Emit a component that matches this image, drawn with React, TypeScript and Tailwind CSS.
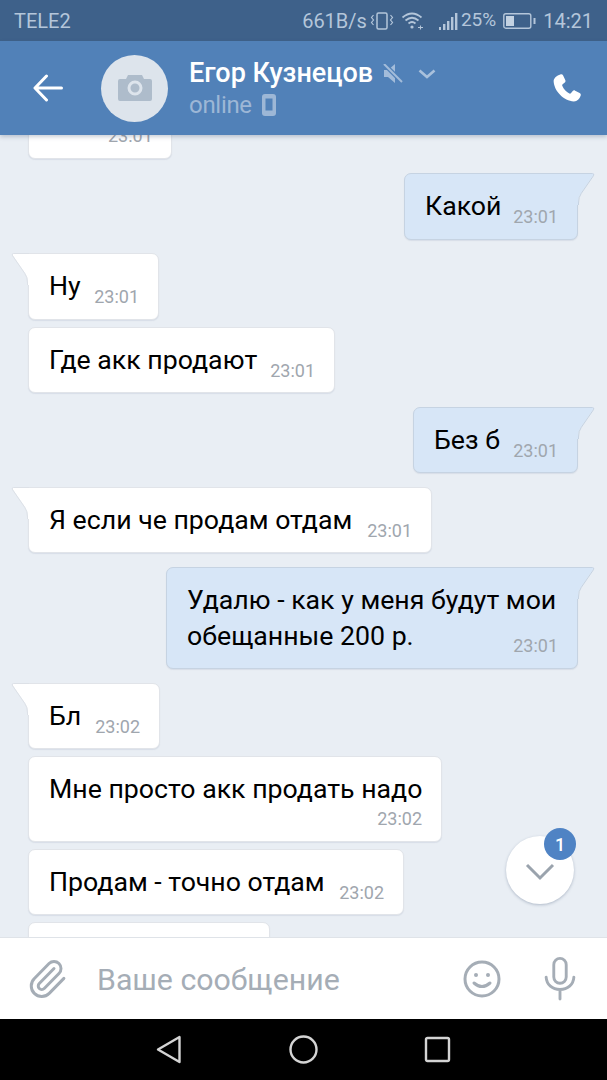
import React from 'react';

const font = { fontFamily: 'Roboto, sans-serif' };

type Msg = {
  text: string;
  last?: string;
  time: string;
  out?: boolean;
  tail?: boolean;
  width: number;
  below?: boolean;
  gap: string;
  h: string;
};

const messages: Msg[] = [
  { text: 'Какой', time: '23:01', out: true, tail: true, width: 174, gap: 'mt-[14px]', h: 'h-[67px]' },
  { text: 'Ну', time: '23:01', tail: true, width: 131, gap: 'mt-[13px]', h: 'h-[67px]' },
  { text: 'Где акк продают', time: '23:01', width: 307, gap: 'mt-[7px]', h: 'h-[66px]' },
  { text: 'Без б', time: '23:01', out: true, tail: true, width: 165, gap: 'mt-[14px]', h: 'h-[66px]' },
  { text: 'Я если че продам отдам', time: '23:01', tail: true, width: 404, gap: 'mt-[14px]', h: 'h-[66px]' },
  {
    text: 'Удалю - как у меня будут мои',
    last: 'обещанные 200 р.',
    time: '23:01',
    out: true,
    tail: true,
    width: 412,
    below: true,
    gap: 'mt-[14px]',
    h: 'h-[102px]',
  },
  { text: 'Бл', time: '23:02', tail: true, width: 132, gap: 'mt-[14px]', h: 'h-[66px]' },
  { text: 'Мне просто акк продать надо', time: '23:02', width: 414, below: true, gap: 'mt-[7px]', h: 'h-[86px]' },
  { text: 'Продам - точно отдам', time: '23:02', width: 376, gap: 'mt-[7px]', h: 'h-[66px]' },
  { text: '', time: '', width: 242, gap: 'mt-[7px]', h: 'h-[66px]' },
];

const Tail = ({ out }: { out?: boolean }) => (
  <svg
    width="18"
    height="32"
    viewBox="0 0 18 32"
    className={out ? 'absolute left-full -ml-px top-0' : 'absolute right-full -mr-px top-0'}
  >
    {out ? (
      <>
        <path d="M0 1 H15.5 Q17 1 16 2.6 L4 20 Q1 24 1 30 V32 H0 Z" fill="#d7e6f7" />
        <path d="M0 .5 H15.5 Q17.6 .5 16.4 2.8 L4.3 20.3 Q1.5 24 1.5 30 V32" fill="none" stroke="#c6d3e2" />
      </>
    ) : (
      <>
        <path d="M18 1 H2.5 Q1 1 2 2.6 L14 20 Q17 24 17 30 V32 H18 Z" fill="#fff" />
        <path d="M18 .5 H2.5 Q.4 .5 1.6 2.8 L13.7 20.3 Q16.5 24 16.5 30 V32" fill="none" stroke="#dde1e7" />
      </>
    )}
  </svg>
);

const Bubble = ({ m }: { m: Msg }) => (
  <div className={`relative shrink-0 ${m.gap} ${m.h} ${m.out ? 'self-end mr-[29px]' : 'self-start ml-[28px]'}`} style={{ width: m.width }}>
    <div
      className={`h-full border shadow-[0_1px_1px_rgba(90,110,140,0.12)] ${
        m.out
          ? 'bg-[#d7e6f7] border-[#c6d3e2] rounded-[7px] rounded-tr-none'
          : 'bg-white border-[#e1e4e9] rounded-[7px]' + (m.tail ? ' rounded-tl-none' : '')
      }`}
    >
      {m.below ? (
        <div className="h-full flex flex-col pl-5 pr-[19px] pt-[14px]">
          <p className="text-[26.7px] leading-[36px] text-black whitespace-nowrap">{m.text}</p>
          <div className="flex items-start">
            {m.last && <p className="text-[26.7px] leading-[36px] text-black whitespace-nowrap">{m.last}</p>}
            <span className={`text-[18px] leading-[22px] text-[#a0a6ae] ml-auto ${m.last ? 'mt-[17px]' : 'mt-[1px]'}`}>{m.time}</span>
          </div>
        </div>
      ) : (
        <div className="h-full flex items-start pl-5 pr-[19px] pt-[14px]">
          <p className="text-[26.7px] leading-[36px] text-black whitespace-nowrap">{m.text}</p>
          <span className="text-[18px] leading-[22px] text-[#a0a6ae] ml-auto mt-[18px]">{m.time}</span>
        </div>
      )}
    </div>
    {m.tail && <Tail out={m.out} />}
  </div>
);

const StatusBar = () => (
  <div className="h-[41px] shrink-0 bg-[#3e618a] flex items-center pl-[14px] pr-[14px] text-[20px] text-[#b4c6da]">
    <span>TELE2</span>
    <div className="ml-auto flex items-center">
      <span>661B/s</span>
      <svg width="24" height="22" viewBox="0 0 24 22" className="ml-[3px]" fill="none" stroke="#b4c6da" strokeWidth="1.5">
        <rect x="7" y="3" width="10" height="16" rx="1.5" />
        <path d="M3.5 5 L1.5 7.5 L3.5 10 L1.5 12.5 L3.5 15 M20.5 5 L22.5 7.5 L20.5 10 L22.5 12.5 L20.5 15" strokeWidth="1.2" />
      </svg>
      <svg width="24" height="20" viewBox="0 0 24 20" className="ml-[7px]" fill="none" stroke="#b4c6da" strokeWidth="1.7">
        <path d="M1.5 6.5 Q11 -1.5 20.5 6.5 M4.5 9.5 Q11 4 17.5 9.5 M7.5 12.5 Q11 9.5 14.5 12.5" />
        <circle cx="11" cy="16" r="1.6" fill="#b4c6da" stroke="none" />
        <path d="M17 16.5 h5 M19.5 14.5 v4" strokeWidth="1.1" />
      </svg>
      <svg width="22" height="22" viewBox="0 0 22 22" className="ml-[13px]" fill="#b4c6da">
        <rect x="1" y="17" width="2" height="3" />
        <rect x="5" y="14" width="2.4" height="6" />
        <rect x="9" y="11" width="2.4" height="9" />
        <rect x="13" y="7" width="2.4" height="13" />
        <rect x="17" y="3" width="2.4" height="17" />
      </svg>
      <span className="ml-[1px] text-[19px]">25%</span>
      <svg width="34" height="18" viewBox="0 0 34 18" className="ml-[7px]" fill="none">
        <rect x=".8" y="1.8" width="27" height="14.4" rx="2" stroke="#b4c6da" strokeWidth="1.4" />
        <rect x="3" y="4" width="8" height="10" fill="#c3d2e2" />
        <rect x="30.5" y="6" width="2" height="6" fill="#b4c6da" />
      </svg>
      <span className="ml-[6px]">14:21</span>
    </div>
  </div>
);

const Header = () => (
  <div className="h-[94px] shrink-0 bg-[#5181b8] flex items-center relative z-10 shadow-[0_2px_4px_rgba(50,70,100,0.25)]">
    <svg width="30" height="28" viewBox="0 0 30 28" className="ml-[33px]" fill="none" stroke="#fff" strokeWidth="3" strokeLinecap="round" strokeLinejoin="round">
      <path d="M28.5 14 H3 M13.5 2 L2 14 L13.5 26" />
    </svg>
    <div className="ml-[38px] w-[67px] h-[67px] rounded-full bg-[#dde4ec] flex items-center justify-center">
      <svg width="34" height="26" viewBox="0 0 34 26">
        <path
          fillRule="evenodd"
          d="M2 4 H8 L10 0 H24 L26 4 H32 Q34 4 34 6 V24 Q34 26 32 26 H2 Q0 26 0 24 V6 Q0 4 2 4 Z M17 5.5 A7.5 7.5 0 1 0 17 20.5 A7.5 7.5 0 1 0 17 5.5 Z M17 8.5 A4.5 4.5 0 1 1 17 17.5 A4.5 4.5 0 1 1 17 8.5 Z"
          fill="#aebccb"
        />
      </svg>
    </div>
    <div className="ml-[21px] flex flex-col pt-[2px]">
      <div className="flex items-center h-[36px]">
        <span className="text-[27px] font-medium text-white whitespace-nowrap">Егор Кузнецов</span>
        <svg width="20" height="19" viewBox="0 0 20 19" className="ml-[10px]" fill="#a3bcda">
          <path d="M1 6 H5 L12 0 V19 L5 13 H1 Z" />
          <path d="M2 1 L19 18" stroke="#5181b8" strokeWidth="4.5" />
          <path d="M1 0 L19 18" stroke="#a3bcda" strokeWidth="2" />
        </svg>
        <svg width="18" height="10" viewBox="0 0 18 10" className="ml-[15px]" fill="none" stroke="#a9c1dc" strokeWidth="2.6">
          <path d="M1.5 1.5 L9 8 L16.5 1.5" />
        </svg>
      </div>
      <div className="flex items-center h-[36px] -mt-[5px]">
        <span className="text-[24px] text-[#9db7d6] tracking-[-0.3px]">online</span>
        <svg width="14" height="22" viewBox="0 0 14 22" className="ml-[10px]" fill="none">
          <rect x="0" y="0" width="14" height="22" rx="3" fill="#9db7d6" />
          <rect x="3.5" y="4.5" width="7" height="12" fill="#5181b8" />
        </svg>
      </div>
    </div>
    <svg width="30" height="30" viewBox="0 0 24 24" fill="#fff" className="ml-auto mr-[25px]">
      <path d="M6.6 1.2 C7.6 .7 8.4 1 8.9 1.9 L10.6 5.6 C11 6.5 10.8 7.2 10 7.8 L8.5 9 C8.1 9.3 8 9.7 8.2 10.2 C9.4 13 11.2 15.1 13.9 16.4 C14.4 16.6 14.8 16.5 15.1 16.1 L16.4 14.6 C17 13.9 17.7 13.7 18.5 14.1 L22.1 15.9 C23 16.4 23.3 17.2 22.9 18.1 C22 20.6 20.2 22.6 17.5 22.7 C9.5 22.4 1.6 14.5 1.3 6.4 C1.4 4 3.9 2.1 6.6 1.2 Z" />
    </svg>
  </div>
);

const InputBar = () => (
  <div className="h-[82px] shrink-0 bg-white border-t border-[#dfe3e8] flex items-center">
    <svg width="42" height="42" viewBox="0 0 24 24" className="ml-[26px]" fill="none" stroke="#a5adb6" strokeWidth="1.7" strokeLinecap="round">
      <path d="m16 6-8.414 8.586a2 2 0 0 0 2.829 2.829l8.414-8.586a4 4 0 1 0-5.657-5.657l-8.379 8.551a6 6 0 1 0 8.485 8.485l8.379-8.551" />
    </svg>
    <span className="ml-[29px] mt-[2px] text-[30.3px] text-[#a5adb6]">Ваше сообщение</span>
    <svg width="38" height="38" viewBox="0 0 38 38" className="ml-auto" fill="none" stroke="#a5adb6" strokeWidth="3" strokeLinecap="round">
      <circle cx="19" cy="19" r="17" />
      <circle cx="13" cy="15" r="2" fill="#a5adb6" stroke="none" />
      <circle cx="25" cy="15" r="2" fill="#a5adb6" stroke="none" />
      <path d="M11 23 Q19 30 27 23" />
    </svg>
    <svg width="32" height="44" viewBox="0 0 32 46" className="ml-[43px] mr-[31px]" fill="none" stroke="#a5adb6" strokeWidth="3" strokeLinecap="round">
      <rect x="9.5" y="1.5" width="13" height="26" rx="6.5" />
      <path d="M1.5 21 C2 29 8 34 16 34 C24 34 30 29 30.5 21 M16 34 V44" />
    </svg>
  </div>
);

const NavBar = () => (
  <div className="h-[61px] shrink-0 bg-black flex items-center">
    <svg width="26" height="29" viewBox="0 0 26 29" className="ml-[156px]" fill="none" stroke="#d4d4d4" strokeWidth="2.4" strokeLinejoin="round">
      <path d="M23.5 2 V27 L2 14.5 Z" />
    </svg>
    <svg width="29" height="29" viewBox="0 0 29 29" className="ml-[107px]" fill="none" stroke="#d4d4d4" strokeWidth="2.4">
      <circle cx="14.5" cy="14.5" r="13" />
    </svg>
    <svg width="27" height="27" viewBox="0 0 27 27" className="ml-[106px]" fill="none" stroke="#d4d4d4" strokeWidth="2.4" strokeLinejoin="round">
      <rect x="2" y="2" width="23" height="23" rx="1.5" />
    </svg>
  </div>
);

export default function App() {
  return (
    <div className="w-[607px] h-[1080px] flex flex-col overflow-hidden bg-[#e9eef4]" style={font}>
      <StatusBar />
      <Header />
      <div className="relative flex-1 min-h-0 overflow-hidden flex flex-col">
        {/* bubble scrolled under the header */}
        <div className="relative shrink-0 self-start ml-[28px] -mt-[42px] w-[144px] h-[66px] bg-white border border-[#e1e4e9] rounded-[7px] shadow-[0_1px_1px_rgba(90,110,140,0.12)]">
          <span className="absolute left-[79px] top-[31px] text-[18px] leading-[22px] text-[#a0a6ae]">23:01</span>
        </div>
        {messages.map((m, i) => (
          <Bubble key={i} m={m} />
        ))}
        <div className="absolute left-[506px] top-[701px] w-[68px] h-[68px] rounded-[50%] bg-white shadow-[0_1px_3px_rgba(70,90,120,0.35)] flex items-center justify-center">
          <svg width="30" height="18" viewBox="0 0 30 18" className="mt-[3px]" fill="none" stroke="#9aa3ad" strokeWidth="3">
            <path d="M2 2 L15 15 L28 2" />
          </svg>
          <div className="absolute left-[38px] -top-[8px] w-[32px] h-[32px] rounded-full bg-[#4f83c4] text-white text-[18px] font-medium flex items-center justify-center">
            1
          </div>
        </div>
      </div>
      <InputBar />
      <NavBar />
    </div>
  );
}
